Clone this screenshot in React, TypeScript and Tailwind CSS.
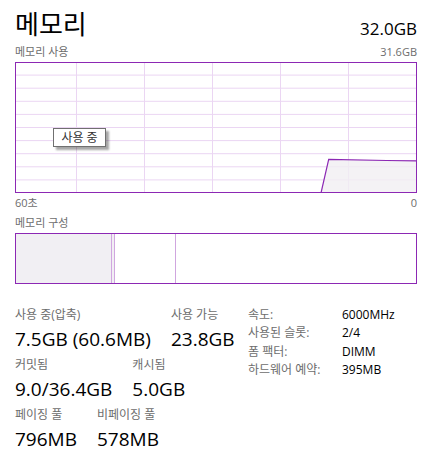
import React from "react";

const font = { fontFamily: '"Open Sans", "Noto Sans CJK KR", sans-serif' };

const Stat = ({ label, value }: { label: string; value: string }) => (
  <div className="flex flex-col">
    <div className="text-[12px] leading-[18px] text-[#6d6d6d]">{label}</div>
    <div className="text-[19px] leading-[30px] text-black">{value}</div>
  </div>
);

const UsageGraph = () => {
  const w = 402;
  const h = 131;
  const cols = [61, 129, 197, 265, 333];
  const rows = Array.from({ length: 9 }, (_, i) => (i + 1) * 13.1);
  return (
    <div className="relative h-[131px] w-full">
      <svg width={w} height={h} viewBox={`0 0 ${w} ${h}`} className="block">
        {rows.map((y) => (
          <line key={y} x1={0} x2={w} y1={y} y2={y} stroke="#ebd6f3" strokeWidth={1} />
        ))}
        {cols.map((x) => (
          <line key={x} x1={x + 0.5} x2={x + 0.5} y1={0} y2={h} stroke="#ebd6f3" strokeWidth={1} />
        ))}
        <polygon points="306,131 313.7,97.3 371.7,98.5 402,98.8 402,131" fill="#f1eff3" fillOpacity={0.8} />
        <polyline points="306,131 313.7,97.3 371.7,98.5 402,98.8" fill="none" stroke="#8c28b4" strokeWidth={1.2} />
        <rect x={0.5} y={0.5} width={w - 1} height={h - 1} fill="none" stroke="#8c28b4" strokeWidth={1} />
      </svg>
      <div className="absolute left-[38px] top-[66px] flex h-[19px] w-[53px] items-center justify-center border border-[#707070] bg-white text-[12px] text-[#333] shadow-[3px_3px_2px_rgba(0,0,0,0.35)]">
        사용 중
      </div>
    </div>
  );
};

const CompositionBar = () => (
  <div className="flex h-[51px] w-full border border-[#8c28b4]">
    <div className="w-[95px] bg-[#f1eff3]" />
    <div className="w-[1px] bg-[#d0a6df]" />
    <div className="w-[2px] bg-[#f1eff3]" />
    <div className="w-[1px] bg-[#d0a6df]" />
    <div className="w-[60px]" />
    <div className="w-[1px] bg-[#d0a6df]" />
    <div className="flex-1" />
  </div>
);

export default function App() {
  return (
    <div className="h-[463px] w-[422px] overflow-hidden bg-white pl-[15px] pr-[5px]" style={font}>
      <div className="flex h-[42px] items-end justify-between">
        <div className="text-[26px] leading-[36px] text-black">메모리</div>
        <div className="text-[17px] leading-[26px] text-black">32.0GB</div>
      </div>
      <div className="flex h-[20px] items-center justify-between text-[11px] text-[#6d6d6d]">
        <span>메모리 사용</span>
        <span>31.6GB</span>
      </div>
      <UsageGraph />
      <div className="flex h-[20px] items-center justify-between text-[11px] text-[#6d6d6d]">
        <span>60초</span>
        <span>0</span>
      </div>
      <div className="flex h-[20px] items-center text-[11px] text-[#6d6d6d]">메모리 구성</div>
      <CompositionBar />
      <div className="mt-[22px] flex items-start">
        <div className="flex w-[233px] flex-col gap-[2px]">
          <div className="flex gap-5">
            <Stat label="사용 중(압축)" value="7.5GB (60.6MB)" />
            <Stat label="사용 가능" value="23.8GB" />
          </div>
          <div className="flex gap-5">
            <Stat label="커밋됨" value="9.0/36.4GB" />
            <Stat label="캐시됨" value="5.0GB" />
          </div>
          <div className="flex gap-5">
            <Stat label="페이징 풀" value="796MB" />
            <Stat label="비페이징 풀" value="578MB" />
          </div>
        </div>
        <div className="grid grid-cols-[94px_1fr] content-start text-[12px] leading-[18.3px]">
          <span className="text-[#6d6d6d]">속도:</span>
          <span className="text-black">6000MHz</span>
          <span className="text-[#6d6d6d]">사용된 슬롯:</span>
          <span className="text-black">2/4</span>
          <span className="text-[#6d6d6d]">폼 팩터:</span>
          <span className="text-black">DIMM</span>
          <span className="text-[#6d6d6d]">하드웨어 예약:</span>
          <span className="text-black">395MB</span>
        </div>
      </div>
    </div>
  );
}
